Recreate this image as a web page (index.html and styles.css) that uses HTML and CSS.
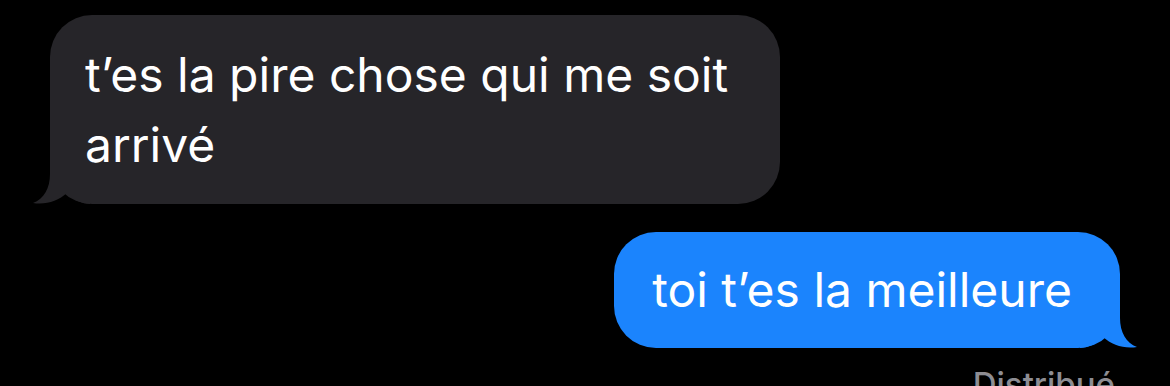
FILE: index.html
```html
<!DOCTYPE html>
<html lang="fr">
<head>
  <meta charset="UTF-8" />
  <meta name="viewport" content="width=device-width, initial-scale=1.0" />
  <title>Messages</title>
  <link rel="stylesheet" href="styles.css">
</head>
<body>
  <div class="thread">
    <!-- Message reçu -->
    <div class="row row-them">
      <div class="bubble bubble-them">
        t’es la pire chose qui me soit arrivé
        <svg class="tail tail-them" width="60" height="42" viewBox="-20 -42 60 42">
          <path d="M0 -42 L0 -30 C0 -16 -6 -5 -17 -1 C-4 1 8 -3 17 -11 C24 -4 32 0 40 0 L40 -42 Z" />
        </svg>
      </div>
    </div>

    <!-- Message envoyé -->
    <div class="row row-me">
      <div class="bubble bubble-me">
        toi t’es la meilleure
        <svg class="tail tail-me" width="60" height="42" viewBox="-40 -42 60 42">
          <path d="M0 -42 L0 -30 C0 -16 6 -5 17 -1 C4 1 -8 -3 -17 -11 C-24 -4 -32 0 -40 0 L-40 -42 Z" />
        </svg>
      </div>
    </div>
    <div class="status">Distribué</div>
  </div>
</body>
</html>
```

FILE: styles.css
```css
/* Fil de messages */
body {
  margin: 0;
  background-color: #000;
  font-family: Inter, "Noto Sans", sans-serif;
  overflow: hidden;
}
.thread {
  padding: 15px 50px 0 50px;
}
.row {
  display: flex;
}
.row-me {
  justify-content: flex-end;
  margin-top: 28px;
}
.bubble {
  position: relative;
  color: #fff;
  font-size: 48px;
  line-height: 70px;
  border-radius: 42px;
}
.bubble-them {
  max-width: 730px;
  box-sizing: border-box;
  padding: 25px 40px 24px 35px;
  background-color: #262529;
}
.bubble-me {
  padding: 23px 48px 23px 38px;
  background-color: #1b84fd;
}
/* Queues des bulles */
.tail {
  position: absolute;
  bottom: 0;
}
.tail-them {
  left: -20px;
  fill: #262529;
}
.tail-me {
  right: -20px;
  fill: #1b84fd;
}
.status {
  text-align: right;
  padding-right: 5px;
  margin-top: 16px;
  color: #8d8d93;
  font-size: 33px;
  font-weight: 500;
}
```
